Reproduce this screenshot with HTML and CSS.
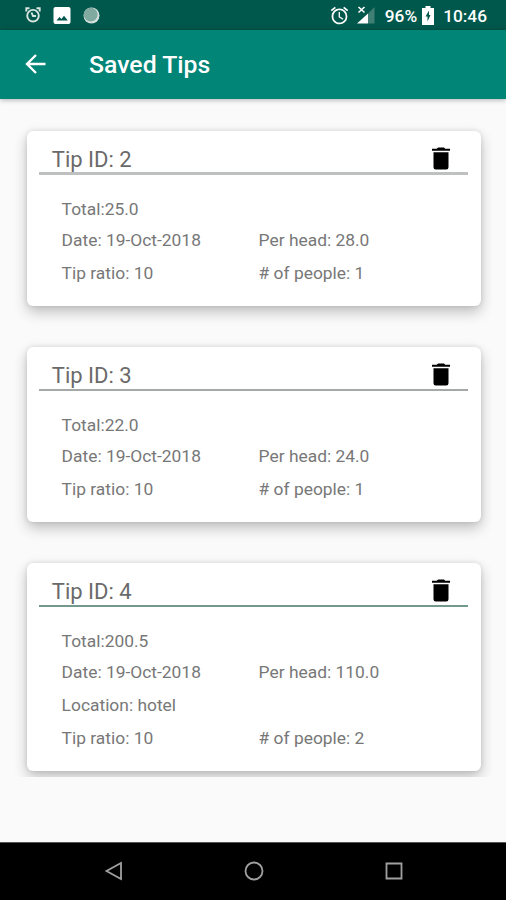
FILE: index.html
```html
<!DOCTYPE html>
<html lang="en">
<head>
<meta charset="utf-8">
<title>Saved Tips</title>
<link rel="stylesheet" href="styles.css">
</head>
<body>
<svg class="defs" width="0" height="0" aria-hidden="true">
  <symbol id="alarm" viewBox="0 0 24 24"><path d="M22 5.72l-4.6-3.86-1.29 1.53 4.6 3.86L22 5.72zM7.88 3.39L6.6 1.86 2 5.71l1.29 1.53 4.59-3.85zM12.5 8H11v6l4.75 2.85.75-1.23-4-2.37V8zM12 4c-4.97 0-9 4.03-9 9s4.02 9 9 9a9 9 0 0 0 0-18zm0 16c-3.87 0-7-3.13-7-7s3.13-7 7-7 7 3.13 7 7-3.13 7-7 7z"/></symbol>
  <symbol id="trash" viewBox="0 0 18 23"><path d="M1.5 5.3h15v14.9q0 2.3-2.3 2.3H3.8q-2.3 0-2.3-2.3zM0 1.7h4.8L6 .4h6l1.2 1.3H18v2H0z"/></symbol>
</svg>
<div class="screen">
  <div class="status">
    <div class="status-left">
      <svg class="alarm-small" viewBox="0 0 16 16"><g fill="none" stroke="#d8e5e1" stroke-width="1.9"><circle cx="8" cy="8.7" r="5.8"/><path d="M1.3 4.5V1.3H4.500M14.700 4.500V1.300H11.500M6.500 5.500l1.500 3.500h3"/></g></svg>
      <svg class="photo" viewBox="0 0 17 17"><rect width="17" height="17" rx="2" fill="#fff"/><path d="M3 13.5l3-3.500 2 2 2.500-3.300 3.800 4.800z" fill="#00574b"/></svg>
      <svg class="disc" viewBox="0 0 17 17"><circle cx="8.500" cy="8.500" r="8" fill="#d5e1de"/><circle cx="7.700" cy="7.700" r="6.900" fill="#80aaa0"/></svg>
    </div>
    <div class="status-right">
      <svg class="alarm"><use href="#alarm"/></svg>
      <svg class="signal" viewBox="0 0 18 18"><path d="M17.500 1v16.500H11V7.500z" fill="#407f74"/><path d="M0 17.500L11 7.500v10z" fill="#fff"/><path d="M1.500 1l6 5.500M7.500 1l-6 5.500" stroke="#fff" stroke-width="1.600"/></svg>
      <span class="percent">96%</span>
      <svg class="battery" viewBox="0 0 12 19"><path d="M3.500 0h5v2H12v17H0V2h3.500z" fill="#fff"/><path d="M7 4.500L3.500 10.500h2v5L8.500 9H7z" fill="#00574b"/></svg>
      <span class="clock">10:46</span>
    </div>
  </div>
  <header class="appbar">
    <svg class="back" viewBox="0 0 20 20"><path d="M20 10H2M10.500 1L1.500 10l9 9" fill="none" stroke="#fff" stroke-width="2.400"/></svg>
    <h1>Saved Tips</h1>
  </header>
  <main class="list">
    <article class="card">
      <div class="head"><h2>Tip ID: 2</h2><svg class="trash"><use href="#trash"/></svg></div>
      <div class="details">
        <span class="total">Total:25.0</span>
        <span>Date: 19-Oct-2018</span><span>Per head: 28.0</span>
        <span>Tip ratio: 10</span><span># of people: 1</span>
      </div>
    </article>
    <article class="card">
      <div class="head thin"><h2>Tip ID: 3</h2><svg class="trash"><use href="#trash"/></svg></div>
      <div class="details">
        <span class="total">Total:22.0</span>
        <span>Date: 19-Oct-2018</span><span>Per head: 24.0</span>
        <span>Tip ratio: 10</span><span># of people: 1</span>
      </div>
    </article>
    <article class="card">
      <div class="head green"><h2>Tip ID: 4</h2><svg class="trash"><use href="#trash"/></svg></div>
      <div class="details">
        <span class="total">Total:200.5</span>
        <span>Date: 19-Oct-2018</span><span>Per head: 110.0</span>
        <span class="wide">Location: hotel</span>
        <span>Tip ratio: 10</span><span># of people: 2</span>
      </div>
    </article>
  </main>
  <nav class="navbar">
    <svg viewBox="0 0 20 20"><path d="M17 2v16L2.500 10z"/></svg>
    <svg viewBox="0 0 20 20"><circle cx="10" cy="10" r="8.500"/></svg>
    <svg viewBox="0 0 20 20"><path d="M2.500 2.500h15v15h-15z"/></svg>
  </nav>
</div>
</body>
</html>
```
FILE: styles.css
```css
* { box-sizing: border-box; }
body { margin: 0; font-family: Roboto, "Liberation Sans", sans-serif; }
h1, h2 { margin: 0; }
svg { display: block; flex: none; }
.defs { position: absolute; }
.screen { width: 506px; height: 900px; display: flex; flex-direction: column; background: #fafafa; overflow: hidden; }
.status { height: 30px; flex: none; display: flex; justify-content: space-between; background: #00574b; color: #fff; padding: 0 19px 0 25px; }
.status-left, .status-right { display: flex; align-items: center; }
.alarm-small { width: 16px; height: 16px; margin-right: 12px; }
.photo { width: 18px; height: 17px; margin-right: 12px; }
.disc { width: 17px; height: 17px; }
.alarm { width: 21px; height: 21px; fill: #fff; margin-right: 7px; }
.signal { width: 18px; height: 18px; margin-right: 10px; }
.percent, .clock { font-size: 17.3px; font-weight: 500; line-height: 30px; padding-top: 2px; }
.battery { width: 12px; height: 19px; margin: 0 9px 0 5px; }
.appbar { height: 69px; flex: none; display: flex; align-items: center; padding-left: 25px; background: #008577; box-shadow: 0 1px 5px rgba(0,0,0,.3); z-index: 1; }
.back { width: 21px; height: 20px; margin: 0 43px 1px 0; }
h1 { font-size: 24.8px; font-weight: 500; color: #fff; line-height: 30px; padding-top: 1px; }
.list { margin: 0 14px; height: 678px; padding: 32.4px 11.5px 0 12.8px; flex: none; display: flex; flex-direction: column; gap: 41.5px; overflow: hidden; }
.card { flex: none; background: #fff; border-radius: 6px; padding: 0 12.5px 16px; box-shadow: 0 6px 14px rgba(0,0,0,.24), 0 0 5px rgba(0,0,0,.11); }
.head { height: 43.5px; display: flex; justify-content: space-between; padding: 15.500px 18px 0 12.500px; border-bottom: 3px solid #bfc1c1; }
.head.thin { border-bottom: 2px solid #a4a8a7; }
.head.green { border-bottom: 2px solid #73998e; }
h2 { font-size: 22px; font-weight: 400; line-height: 26px; color: #6a6a6a; }
.trash { width: 18px; height: 23px; fill: #000; }
.details { display: grid; grid-template-columns: 197px 1fr; padding: 20px 0 0 22.300px; font-size: 17.400px; line-height: 33px; color: #777; }
.total { grid-column: 1 / -1; line-height: 29px; }
.wide { grid-column: 1 / -1; }
.navbar { margin-top: auto; height: 58px; flex: none; display: flex; justify-content: center; align-items: center; gap: 120px; background: #000; border-top: 1px solid #555; padding: 0 0 2px 1px; }
.navbar svg { width: 20px; height: 20px; fill: none; stroke: #a0a0a0; stroke-width: 1.8; }
```
